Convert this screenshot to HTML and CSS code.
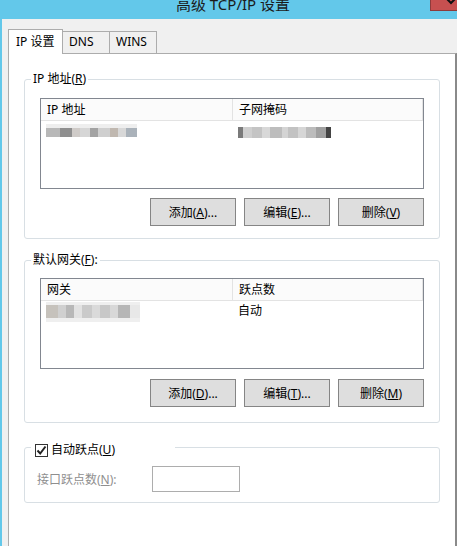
FILE: index.html
```html
<!DOCTYPE html>
<html lang="zh-CN">
<head>
    <meta charset="UTF-8">
    <meta name="viewport" content="width=device-width, initial-scale=1.0">
    <title>高级 TCP/IP 设置</title>
    <link rel="stylesheet" href="styles.css">
</head>
<body>
    <div class="window">
        <div class="titlebar">
            <div class="title">高级 TCP/IP 设置</div>
            <div class="close">
                <svg width="12" height="6" viewBox="0 0 12 6"><path d="M1 -2 L6 3 L11 -2" stroke="#111" stroke-width="2" fill="none"/></svg>
            </div>
        </div>

        <div class="client">
            <div class="tabs">
                <div class="tab active">IP 设置</div>
                <div class="tab">DNS</div>
                <div class="tab">WINS</div>
            </div>

            <div class="panel">
                <fieldset class="group" id="ipGroup">
                    <legend>IP 地址(<u>R</u>)</legend>
                    <div class="listbox">
                        <div class="list-head">
                            <div class="cell">IP 地址</div>
                            <div class="cell">子网掩码</div>
                        </div>
                        <div class="list-row">
                            <div class="cell"><span class="mosaic m-ip"></span></div>
                            <div class="cell"><span class="mosaic m-mask"></span></div>
                        </div>
                    </div>
                    <div class="buttons">
                        <button>添加(<u>A</u>)...</button>
                        <button>编辑(<u>E</u>)...</button>
                        <button>删除(<u>V</u>)</button>
                    </div>
                </fieldset>

                <fieldset class="group" id="gatewayGroup">
                    <legend>默认网关(<u>F</u>):</legend>
                    <div class="listbox">
                        <div class="list-head">
                            <div class="cell">网关</div>
                            <div class="cell">跃点数</div>
                        </div>
                        <div class="list-row">
                            <div class="cell"><span class="mosaic m-gw"></span></div>
                            <div class="cell">自动</div>
                        </div>
                    </div>
                    <div class="buttons">
                        <button>添加(<u>D</u>)...</button>
                        <button>编辑(<u>T</u>)...</button>
                        <button>删除(<u>M</u>)</button>
                    </div>
                </fieldset>

                <fieldset class="group" id="metricGroup">
                    <legend>
                        <span class="checkbox">
                            <svg width="11" height="11" viewBox="0 0 11 11"><path d="M1.5 5.5 L4.2 8.5 L9.5 1.5" stroke="#222" stroke-width="2" fill="none"/></svg>
                        </span>
                        <span>自动跃点(<u>U</u>)</span>
                    </legend>
                    <div class="metric-row">
                        <span class="disabled-label">接口跃点数(<u>N</u>):</span>
                        <span class="textbox"></span>
                    </div>
                </fieldset>
            </div>
        </div>
    </div>
</body>
</html>
```

FILE: styles.css
```css
body {
    margin: 0;
    background-color: #f0f0f0;
    font-family: "Noto Sans", "Noto Sans CJK SC", sans-serif;
    font-size: 12px;
    color: #000;
    overflow: hidden;
}
u {
    text-decoration: underline;
    text-underline-offset: 1px;
}
.window {
    border-left: 2px solid #63c8ea;
    height: 546px;
}
.titlebar {
    position: relative;
    height: 19px;
    background-color: #63c8ea;
    overflow: hidden;
}
.title {
    text-align: center;
    font-size: 15px;
    line-height: 15px;
    margin-top: -3px;
    padding-left: 7px;
    color: #1b1b1b;
}
.close {
    position: absolute;
    top: 0;
    right: -12px;
    width: 37px;
    height: 10px;
    background-color: #c75050;
    border: 1px solid #8e3b3b;
    border-top: none;
    text-align: center;
}
.close svg {
    display: block;
    margin: 0 0 0 14px;
}

.client {
    padding: 10px 0 0 6px;
}
.tabs {
    display: flex;
    align-items: flex-end;
    height: 24px;
    position: relative;
    z-index: 1;
}
.tab {
    box-sizing: border-box;
    width: 48px;
    height: 22px;
    margin-left: -1px;
    padding: 2px 0 0 6px;
    line-height: 16px;
    background-color: #f0f0f0;
    border: 1px solid #acacac;
    border-bottom: none;
}
.tab.active {
    width: 55px;
    height: 25px;
    margin: 0 0 -1px 0;
    padding: 4px 0 0 7px;
    background-color: #fff;
    position: relative;
    z-index: 2;
}
.panel {
    box-sizing: border-box;
    height: 500px;
    padding: 17px 0 0 15px;
    background-color: #fff;
    border: 1px solid #acacac;
    border-right: 2px solid #8a8a8a;
}

.group {
    box-sizing: border-box;
    width: 416px;
    min-width: 0;
    margin: 0;
    padding: 0 15px 12px 15px;
    border: 1px solid #d8dfe4;
    border-radius: 3px;
}
.group legend {
    margin-left: -9px;
    padding: 0 2px;
    line-height: 16px;
}
#gatewayGroup {
    margin-top: 13px;
    padding-bottom: 15px;
}
#gatewayGroup .listbox {
    margin-top: 10px;
}
.listbox {
    box-sizing: border-box;
    height: 91px;
    margin-top: 11px;
    border: 1px solid #828790;
    background-color: #fff;
}
.list-head, .list-row {
    display: grid;
    grid-template-columns: 192px 190px;
}
.list-head {
    height: 22px;
    background-color: #fbfbfb;
    border-bottom: 1px solid #e3e3e3;
    box-sizing: border-box;
}
.list-head .cell {
    padding: 3px 0 0 6px;
    line-height: 16px;
    border-right: 1px solid #e3e3e3;
}
.list-row .cell {
    padding: 3px 0 0 5px;
    line-height: 14px;
    height: 17px;
}
.mosaic {
    display: inline-block;
    vertical-align: top;
}
.m-ip {
    width: 91px;
    height: 13px;
    background:
        linear-gradient(#eeeeee 0 4px, transparent 4px),
        linear-gradient(90deg, #b8b8b8 0 14px, #8f8f8f 14px 26px, #cfcbc8 26px 34px, #d6d6d6 34px 44px, #a3a3a3 44px 52px, #cfcfcf 52px 64px, #c0b8b0 64px 72px, #d8d8d8 72px 80px, #aab2ba 80px 91px);
}
.m-mask {
    width: 93px;
    height: 11px;
    margin-top: 3px;
    background: linear-gradient(90deg, #7a7a7a 0 5px, #cfcfcf 5px 14px, #c4c4c4 14px 24px, #d8d8d8 24px 32px, #bdbdbd 32px 44px, #d4d4d4 44px 50px, #c2c2c2 50px 60px, #d6d6d6 60px 68px, #bcbcbc 68px 78px, #a0a0a0 78px 88px, #444 88px 93px);
}
.m-gw {
    width: 94px;
    height: 20px;
    margin-top: -2px;
    background:
        linear-gradient(transparent 0 4px, rgba(0,0,0,0) 4px),
        linear-gradient(90deg, #c6c2bc 0 12px, #d0d0d0 12px 20px, #b8b8b8 20px 28px, #e2e2e2 28px 36px, #cacaca 36px 46px, #dadada 46px 54px, #c8c8c8 54px 64px, #d8d8d8 64px 72px, #b6b6b6 72px 84px, #e8e8e8 84px 94px);
    box-shadow: inset 0 3px 0 #efefef, inset 0 -4px 0 #efefef;
}

.buttons {
    display: flex;
    justify-content: flex-end;
    gap: 8px;
    margin-top: 9px;
}
#gatewayGroup .buttons {
    margin-top: 10px;
}
button {
    box-sizing: border-box;
    width: 86px;
    height: 28px;
    padding: 0;
    font-family: inherit;
    font-size: 12px;
    color: #000;
    background-color: #dedede;
    border: 1px solid #858585;
}

#metricGroup {
    margin-top: 13px;
    padding: 0 12px 10px 12px;
}
#metricGroup legend {
    display: flex;
    align-items: center;
    gap: 3px;
    box-sizing: border-box;
    width: 144px;
    margin-left: -6px;
    padding: 6px 0 0 4px;
    line-height: 16px;
}
.checkbox {
    box-sizing: border-box;
    width: 13px;
    height: 13px;
    border: 1px solid #333;
    background-color: #fff;
    display: flex;
    align-items: center;
    justify-content: center;
}
.metric-row {
    display: flex;
    align-items: center;
    margin-top: 8px;
}
.disabled-label {
    width: 115px;
    color: #8f8f8f;
}
.textbox {
    box-sizing: border-box;
    width: 88px;
    height: 26px;
    border: 1px solid #adadad;
    background-color: #fff;
}
```
